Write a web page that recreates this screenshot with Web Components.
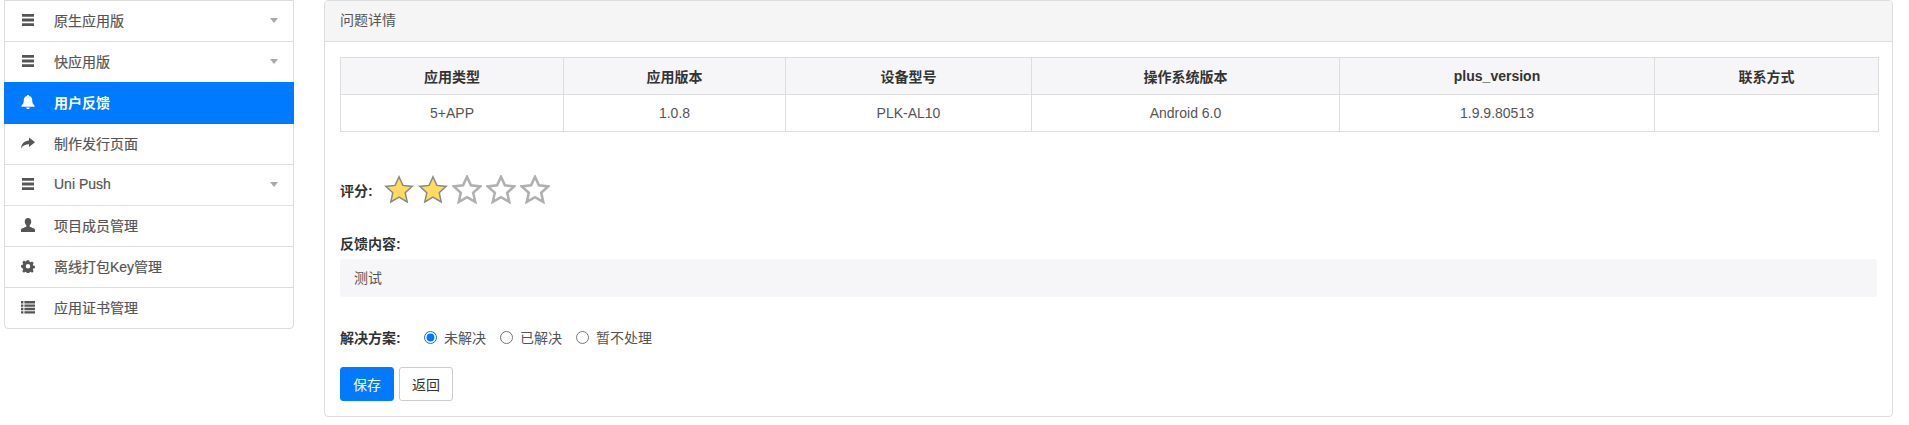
<!DOCTYPE html>
<html lang="zh">
<head>
<meta charset="utf-8">
<title>问题详情</title>
<style>
    html, body { margin: 0; background: #fff; }
    body {
        font-family: "Liberation Sans", "Noto Sans CJK SC", sans-serif;
        font-size: 14px;
        color: #555;
        height: 425px;
        overflow: hidden;
    }
</style>
</head>
<body>
<feedback-page>
    <side-menu slot="side">
        <side-item icon="menu" caret>原生应用版</side-item>
        <side-item icon="menu" caret>快应用版</side-item>
        <side-item icon="bell" active>用户反馈</side-item>
        <side-item icon="share">制作发行页面</side-item>
        <side-item icon="menu" caret>Uni Push</side-item>
        <side-item icon="user">项目成员管理</side-item>
        <side-item icon="cog">离线打包Key管理</side-item>
        <side-item icon="list" last>应用证书管理</side-item>
    </side-menu>
    <detail-panel heading="问题详情">
        <info-table></info-table>
        <star-rating value="2"></star-rating>
        <feedback-text>测试</feedback-text>
        <solution-radios></solution-radios>
        <action-buttons></action-buttons>
    </detail-panel>
</feedback-page>

<script>
const ICONS = {
    menu: '<path d="M1 1h12v2.8H1zM1 5.6h12v2.8H1zM1 10.200h12V13H1z"/>',
    bell: '<path d="M7 0c.8 0 1.200.5 1.200 1.100 2 .5 3 2.100 3 4.200 0 2.800.8 4.100 2.300 5.300v1.200H.5v-1.200C2 9.400 2.800 8.100 2.800 5.300c0-2.100 1-3.700 3-4.200C5.800.5 6.200 0 7 0zM5.200 12.500h3.600c0 1-.8 1.500-1.800 1.500s-1.800-.5-1.800-1.500z"/>',
    share: '<path d="M8 1.500l6 4.800-6 4.800V8.200C4.600 8.200 2 9.200 0 12.200.3 7.800 3.400 4.900 8 4.500z"/>',
    user: '<path d="M7 0c2.100 0 3.200 1.500 3.200 3.500 0 1.600-.6 3-1.500 3.800v1.500c1.800.8 4.500 1.300 5.300 2.700V14H0v-2.500c.8-1.400 3.500-1.900 5.300-2.700V7.300C4.400 6.500 3.800 5.100 3.800 3.500 3.800 1.500 4.900 0 7 0z"/>',
    cog: '<path fill-rule="evenodd" d="M5.700.5h2.600l.4 1.900 1.100.5 1.700-1 1.800 1.800-1 1.700.5 1.100 1.900.4v2.600l-1.900.4-.5 1.100 1 1.700-1.800 1.800-1.700-1-1.100.5-.4 1.900H5.700l-.4-1.900-1.100-.5-1.700 1-1.800-1.800 1-1.700-.5-1.100L-.7 8.500V5.900l1.900-.4.5-1.100-1-1.700 1.800-1.800 1.700 1 1.100-.5zM7 4.700a2.500 2.500 0 1 0 0 5 2.500 2.500 0 0 0 0-5z" transform="translate(.7 .7) scale(.9)"/>',
    list: '<path d="M0 1h2.400v2.400H0zM3.400 1H14v2.400H3.400zM0 4.400h2.400v2.400H0zM3.400 4.400H14v2.400H3.400zM0 7.800h2.400v2.400H0zM3.400 7.800H14v2.400H3.400zM0 11.200h2.400v2.400H0zM3.400 11.200H14v2.400H3.400z"/>'
};

class FeedbackPage extends HTMLElement {
    constructor() {
        super();
        this.attachShadow({ mode: 'open' });
        this.shadowRoot.innerHTML = `
        <style>
            :host { display: flex; align-items: flex-start; gap: 30px; padding: 0 16px 0 4px; }
            ::slotted(side-menu) { flex: 0 0 290px; }
            ::slotted(detail-panel) { flex: 1 1 auto; min-width: 0; }
        </style>
        <slot name="side"></slot>
        <slot></slot>`;
    }
}

class SideMenu extends HTMLElement {
    constructor() {
        super();
        this.attachShadow({ mode: 'open' });
        this.shadowRoot.innerHTML = `
        <style>
            :host {
                display: block;
                box-sizing: border-box;
                border: 1px solid #ddd;
                border-radius: 0 0 4px 4px;
                background: #fff;
                height: 329px;
            }
        </style>
        <slot></slot>`;
    }
}

class SideItem extends HTMLElement {
    constructor() {
        super();
        this.attachShadow({ mode: 'open' });
    }

    connectedCallback() {
        const icon = ICONS[this.getAttribute('icon')] || '';
        const caret = this.hasAttribute('caret') ? '<span class="caret"></span>' : '';
        this.shadowRoot.innerHTML = `
        <style>
            :host {
                display: flex;
                align-items: center;
                box-sizing: border-box;
                height: 41px;
                padding: 0 15px 2px 16px;
                border-bottom: 1px solid #ddd;
                color: #555;
                font-size: 14px;
                font-weight: 400;
                -webkit-text-stroke: 0.2px currentColor;
            }
            :host([last]) { border-bottom: 0; height: 40px; }
            :host([active]) {
                background: #007bff;
                color: #fff;
                border-bottom: 0;
                margin: -1px -1px 0;
                padding: 0 16px 2px 17px;
                height: 42px;
                font-weight: 700;
                -webkit-text-stroke: 0;
            }
            svg { flex: none; width: 14px; height: 14px; fill: currentColor; margin-right: 19px; }
            .label { flex: 1; }
            .caret {
                width: 0;
                height: 0;
                border: 4px solid transparent;
                border-top: 5px solid #aaa;
                border-bottom: 0;
            }
        </style>
        <svg viewBox="0 0 14 14">${icon}</svg>
        <span class="label"><slot></slot></span>
        ${caret}`;
    }
}

class DetailPanel extends HTMLElement {
    constructor() {
        super();
        this.attachShadow({ mode: 'open' });
    }

    connectedCallback() {
        this.shadowRoot.innerHTML = `
        <style>
            :host {
                display: block;
                box-sizing: border-box;
                height: 417px;
                border: 1px solid #ddd;
                border-radius: 4px;
                background: #fff;
                overflow: hidden;
            }
            header {
                box-sizing: border-box;
                height: 41px;
                line-height: 39px;
                padding: 0 15px;
                background: #f5f5f5;
                border-bottom: 1px solid #ddd;
                color: #555;
                font-size: 14px;
            }
            .body { padding: 15px; display: flex; flex-direction: column; }
        </style>
        <header>${this.getAttribute('heading')}</header>
        <div class="body"><slot></slot></div>`;
    }
}

class InfoTable extends HTMLElement {
    constructor() {
        super();
        this.attachShadow({ mode: 'open' });
        const cols = [
            ['应用类型', '5+APP', 223],
            ['应用版本', '1.0.8', 222],
            ['设备型号', 'PLK-AL10', 246],
            ['操作系统版本', 'Android 6.0', 308],
            ['plus_version', '1.9.9.80513', 315],
            ['联系方式', '', 224]
        ];
        this.shadowRoot.innerHTML = `
        <style>
            :host { display: block; }
            table { border-collapse: collapse; table-layout: fixed; width: 1538px; font-size: 14px; }
            th, td { border: 1px solid #ddd; height: 37px; padding: 0 8px; text-align: center; box-sizing: border-box; }
            th { background: #f6f6f8; color: #333; font-weight: 700; }
            td { color: #555; }
        </style>
        <table>
            <colgroup>${cols.map(c => `<col style="width:${c[2]}px">`).join('')}</colgroup>
            <tr>${cols.map(c => `<th>${c[0]}</th>`).join('')}</tr>
            <tr>${cols.map(c => `<td>${c[1]}</td>`).join('')}</tr>
        </table>`;
    }
}

class StarRating extends HTMLElement {
    constructor() {
        super();
        this.attachShadow({ mode: 'open' });
    }

    connectedCallback() {
        const value = Number(this.getAttribute('value')) || 0;
        let stars = '';
        for (let i = 0; i < 5; i++) {
            const on = i < value;
            stars += `<svg viewBox="0 0 30 29" width="30" height="29">
                <path d="M15 1.800l3.900 8.600 9.300 1-7 6.300 2 9.200-8.200-4.700-8.200 4.700 2-9.200-7-6.300 9.300-1z"
                    fill="${on ? '#ffdb60' : '#fff'}" stroke="${on ? '#888' : '#b0b0b0'}" stroke-width="${on ? 1.5 : 2.6}" stroke-linejoin="miter"/>
            </svg>`;
        }
        this.shadowRoot.innerHTML = `
        <style>
            :host { display: flex; align-items: center; margin-top: 43px; height: 29px; }
            b { color: #333; font-size: 14px; width: 44px; }
            .stars { display: flex; gap: 4px; }
        </style>
        <b>评分:</b>
        <div class="stars">${stars}</div>`;
    }
}

class FeedbackText extends HTMLElement {
    constructor() {
        super();
        this.attachShadow({ mode: 'open' });
        this.shadowRoot.innerHTML = `
        <style>
            :host { display: block; margin-top: 30px; }
            b { display: block; color: #333; line-height: 20px; font-size: 14px; }
            div {
                margin-top: 5px;
                height: 38px;
                line-height: 38px;
                padding: 0 14px;
                background: #f6f6f8;
                border-radius: 3px;
                color: #555;
            }
        </style>
        <b>反馈内容:</b>
        <div><slot></slot></div>`;
    }
}

class SolutionRadios extends HTMLElement {
    constructor() {
        super();
        this.attachShadow({ mode: 'open' });
        const opts = ['未解决', '已解决', '暂不处理'];
        this.shadowRoot.innerHTML = `
        <style>
            :host { display: flex; align-items: center; margin-top: 30px; height: 20px; color: #555; }
            b { color: #333; width: 84px; font-size: 14px; }
            label { display: flex; align-items: center; margin-right: 14px; font-size: 14px; }
            input { width: 13px; height: 13px; margin: 0 7px 0 0; }
        </style>
        <b>解决方案:</b>
        ${opts.map((o, i) => `<label><input type="radio" name="fix" ${i === 0 ? 'checked' : ''}>${o}</label>`).join('')}`;
    }
}

class ActionButtons extends HTMLElement {
    constructor() {
        super();
        this.attachShadow({ mode: 'open' });
        this.shadowRoot.innerHTML = `
        <style>
            :host { display: flex; gap: 5px; margin-top: 20px; }
            button {
                box-sizing: border-box;
                width: 54px;
                height: 34px;
                border: 1px solid #ccc;
                border-radius: 3px;
                background: #fff;
                color: #333;
                font: inherit;
                font-size: 14px;
                padding: 0;
            }
            .primary { background: #007bff; border-color: #007bff; color: #fff; }
        </style>
        <button class="primary">保存</button>
        <button>返回</button>`;
    }
}

customElements.define('feedback-page', FeedbackPage);
customElements.define('side-menu', SideMenu);
customElements.define('side-item', SideItem);
customElements.define('detail-panel', DetailPanel);
customElements.define('info-table', InfoTable);
customElements.define('star-rating', StarRating);
customElements.define('feedback-text', FeedbackText);
customElements.define('solution-radios', SolutionRadios);
customElements.define('action-buttons', ActionButtons);
</script>
</body>
</html>
